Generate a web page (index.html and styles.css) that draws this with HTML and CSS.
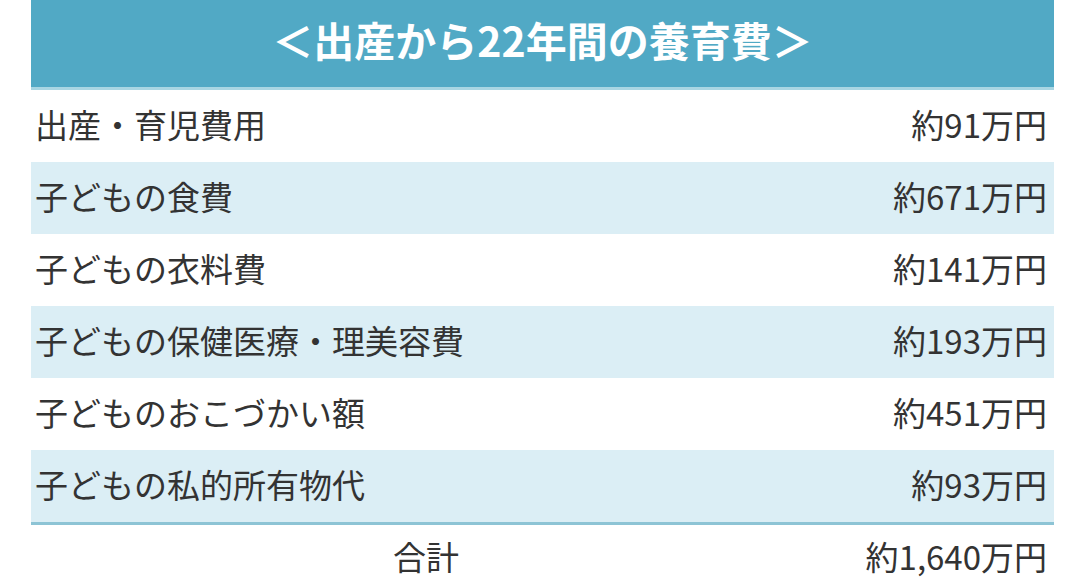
FILE: index.html
```html
<!DOCTYPE html>
<html lang="ja">
<head>
<meta charset="utf-8">
<link rel="stylesheet" href="styles.css">
</head>
<body>
<div class="table">
  <div class="head">＜出産から22年間の養育費＞</div>
  <div class="row"><span class="label">出産・育児費用</span><span class="value">約91万円</span></div>
  <div class="row alt"><span class="label">子どもの食費</span><span class="value">約671万円</span></div>
  <div class="row"><span class="label">子どもの衣料費</span><span class="value">約141万円</span></div>
  <div class="row alt"><span class="label">子どもの保健医療・理美容費</span><span class="value">約193万円</span></div>
  <div class="row"><span class="label">子どものおこづかい額</span><span class="value">約451万円</span></div>
  <div class="row alt"><span class="label">子どもの私的所有物代</span><span class="value">約93万円</span></div>
  <div class="total"><span class="total-label">合計</span><span class="value">約1,640万円</span></div>
</div>
</body>
</html>
```

FILE: styles.css
```css
html, body {
  margin: 0;
  padding: 0;
  background: #ffffff;
}
body {
  width: 1080px;
  height: 578px;
  overflow: hidden;
  font-family: "Noto Sans CJK JP", "Noto Sans", sans-serif;
  color: #333333;
}
.table {
  margin-left: 31px;
  width: 1023px;
}
.head {
  box-sizing: content-box;
  height: 77px;
  padding-bottom: 10px;
  background: #51a9c5;
  border-bottom: 3px solid #a8d6e3;
  color: #ffffff;
  font-weight: 700;
  font-size: 41px;
  display: flex;
  align-items: center;
  justify-content: center;
}
.row {
  box-sizing: border-box;
  height: 72px;
  display: flex;
  align-items: center;
  justify-content: space-between;
  padding: 0 7px 4px 4px;
  font-size: 33px;
}
.row.alt {
  background: #dbeef5;
}
.total {
  box-sizing: content-box;
  border-top: 3px solid #8dc4d5;
  height: 42px;
  padding: 10px 7px 0 0;
  display: grid;
  grid-template-columns: 790px 1fr;
  align-items: center;
  font-size: 33px;
  line-height: 1;
}
.total-label {
  text-align: center;
}
.value {
  text-align: right;
}
```
